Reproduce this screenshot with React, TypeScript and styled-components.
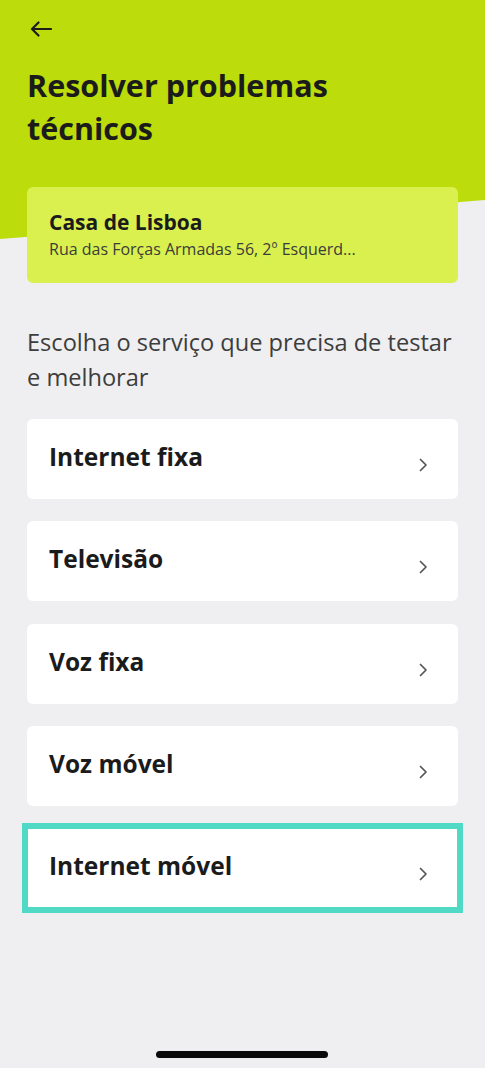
import React from "react";
import styled, { createGlobalStyle } from "styled-components";

const Global = createGlobalStyle`
  html, body { margin: 0; padding: 0; background: #efeff1; }
  body { font-family: "Open Sans", "Noto Sans", sans-serif; }
  * { box-sizing: border-box; }
`;

const Page = styled.div`
  position: relative;
  width: 485px;
  height: 1068px;
  background: #efeff1;
  overflow: hidden;
  &::before {
    content: "";
    position: absolute;
    left: 0;
    top: 0;
    width: 100%;
    height: 240px;
    background: #bcdc0b;
    clip-path: polygon(0 0, 100% 0, 100% 200px, 0 239px);
  }
`;

const Content = styled.div`
  position: relative;
  display: flex;
  flex-direction: column;
  padding: 16px 27px 0 27px;
`;

const BackButton = styled.button`
  background: none;
  border: none;
  padding: 0;
  margin-left: 3px;
  width: 26px;
  height: 26px;
  display: flex;
  align-items: center;
  color: #1d1d1b;
`;

const Title = styled.h1`
  margin: 22px 0 0 0;
  font-size: 30.5px;
  line-height: 43px;
  font-weight: 700;
  color: #1b1b1b;
  letter-spacing: 0;
`;

const AddressCard = styled.div`
  margin-top: 37px;
  background: #d9f04e;
  border-radius: 6px;
  height: 96px;
  padding: 22px 22px 0 22px;
  display: flex;
  flex-direction: column;
`;

const AddressName = styled.div`
  font-size: 21px;
  font-weight: 700;
  color: #1b1b1b;
  line-height: 26px;
`;

const AddressLine = styled.div`
  margin-top: 4px;
  font-size: 16px;
  color: #3c3c3a;
  line-height: 20px;
  white-space: nowrap;
`;

const Intro = styled.p`
  margin: 42px 0 0 0;
  font-size: 23.6px;
  line-height: 34.5px;
  color: #3d3d3d;
  font-weight: 400;
  white-space: nowrap;
`;

const List = styled.div`
  margin-top: 25px;
  display: flex;
  flex-direction: column;
  gap: 22.25px;
`;

const Card = styled.div<{ $highlight?: boolean }>`
  height: 80px;
  background: #fff;
  border-radius: ${(p) => (p.$highlight ? "0" : "6px")};
  display: flex;
  align-items: flex-start;
  justify-content: space-between;
  padding: 23px 30px 0 22px;
  outline: ${(p) => (p.$highlight ? "6px solid #50d9c5" : "none")};
  outline-offset: -1px;
`;

const CardTitle = styled.div`
  font-size: 24.5px;
  font-weight: 700;
  color: #1b1b1b;
  line-height: 30px;
`;

const Chevron = styled.div`
  margin-top: 15px;
  color: #555;
  display: flex;
`;

const HomeIndicator = styled.div`
  position: absolute;
  left: 156px;
  bottom: 10px;
  width: 172px;
  height: 7px;
  border-radius: 4px;
  background: #0a0a0a;
`;

const items = ["Internet fixa", "Televisão", "Voz fixa", "Voz móvel", "Internet móvel"];

export default function App() {
  return (
    <>
      <Global />
      <Page>
        <Content>
          <BackButton aria-label="Voltar">
            <svg width="22" height="16" viewBox="0 0 22 16" fill="none">
              <path d="M21 8H2M8.5 1.5L2 8l6.5 6.5" stroke="#1d1d1b" strokeWidth="2.2" strokeLinecap="round" strokeLinejoin="round" />
            </svg>
          </BackButton>
          <Title>
            Resolver problemas
            <br />
            técnicos
          </Title>
          <AddressCard>
            <AddressName>Casa de Lisboa</AddressName>
            <AddressLine>Rua das Forças Armadas 56, 2º Esquerd...</AddressLine>
          </AddressCard>
          <Intro>
            Escolha o serviço que precisa de testar
            <br />e melhorar
          </Intro>
          <List>
            {items.map((t, i) => (
              <Card key={t} $highlight={i === items.length - 1}>
                <CardTitle>{t}</CardTitle>
                <Chevron>
                  <svg width="10" height="16" viewBox="0 0 10 16" fill="none">
                    <path d="M2.5 2.5l5.5 5.5-5.5 5.5" stroke="#555" strokeWidth="1.7" strokeLinecap="round" strokeLinejoin="round" />
                  </svg>
                </Chevron>
              </Card>
            ))}
          </List>
        </Content>
        <HomeIndicator />
      </Page>
    </>
  );
}
